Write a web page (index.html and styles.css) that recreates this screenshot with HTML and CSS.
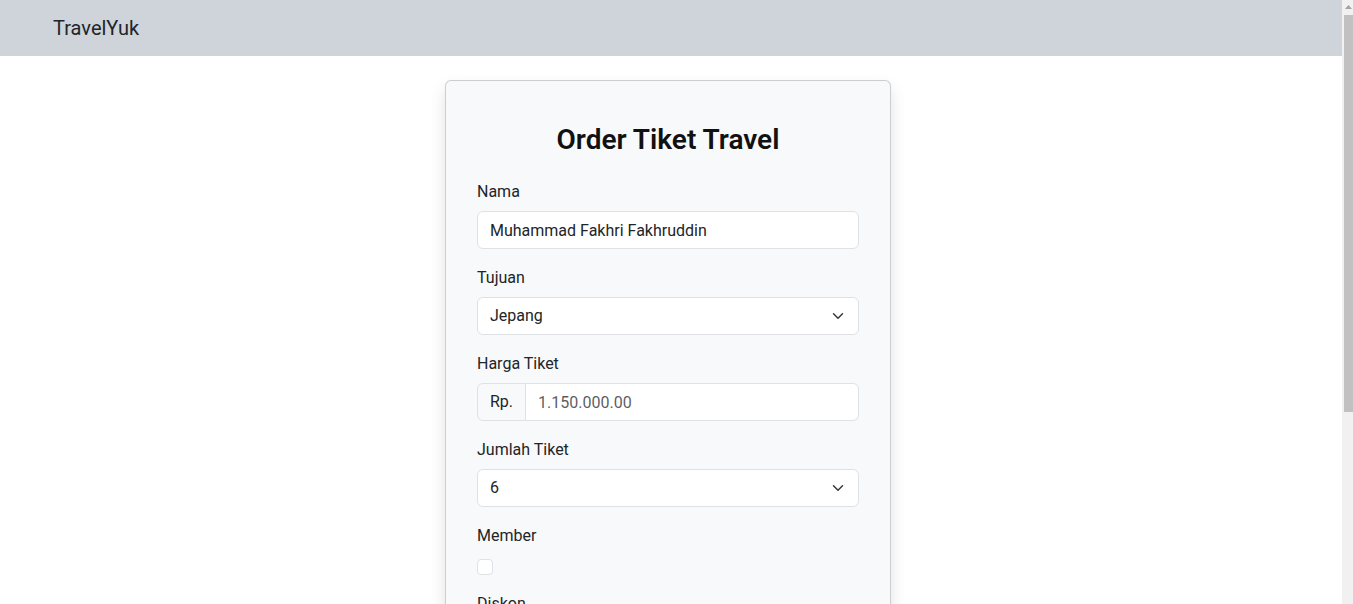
FILE: index.html
```html
<!DOCTYPE html>
<html lang="id">
<head>
<meta charset="utf-8">
<title>TravelYuk</title>
<link rel="stylesheet" href="styles.css">
</head>
<body>
<div class="app">
  <div class="viewport">
    <nav class="navbar">
      <a class="brand" href="#">TravelYuk</a>
    </nav>
    <main class="page">
      <form class="card">
        <h2 class="title">Order Tiket Travel</h2>
        <div class="field">
          <label class="label" for="nama">Nama</label>
          <input class="control" id="nama" type="text" value="Muhammad Fakhri Fakhruddin">
        </div>
        <div class="field">
          <label class="label" for="tujuan">Tujuan</label>
          <select class="control select" id="tujuan">
            <option>Jepang</option>
          </select>
        </div>
        <div class="field">
          <label class="label" for="harga">Harga Tiket</label>
          <div class="group">
            <span class="group-text">Rp.</span>
            <input class="control group-control" id="harga" type="text" placeholder="1.150.000.00" readonly>
          </div>
        </div>
        <div class="field">
          <label class="label" for="jumlah">Jumlah Tiket</label>
          <select class="control select" id="jumlah">
            <option>6</option>
          </select>
        </div>
        <div class="field">
          <label class="label" for="member">Member</label>
          <input class="check" id="member" type="checkbox">
        </div>
        <div class="field">
          <label class="label" for="diskon">Diskon</label>
          <input class="control" id="diskon" type="text" value="0%" readonly>
        </div>
        <div class="field">
          <label class="label" for="total">Total Bayar</label>
          <div class="group">
            <span class="group-text">Rp.</span>
            <input class="control group-control" id="total" type="text" placeholder="6.900.000.00" readonly>
          </div>
        </div>
        <button class="btn" type="button">Pesan</button>
      </form>
    </main>
  </div>
  <div class="scrollbar" aria-hidden="true">
    <div class="sb-button">
      <svg width="7" height="4" viewBox="0 0 7 4"><path d="M0 4 L3.5 0 L7 4 Z" fill="#a3a3a3"/></svg>
    </div>
    <div class="sb-thumb"></div>
  </div>
</div>
</body>
</html>
```
FILE: styles.css
```css
* { box-sizing: border-box; }
html, body { margin: 0; height: 100%; overflow: hidden; }
body {
  font-family: Roboto, "Noto Sans", sans-serif;
  font-size: 16px;
  line-height: 1.5;
  color: #212529;
  background: #fff;
}
.app {
  display: flex;
  height: 100vh;
}
.viewport {
  flex: 1;
  min-width: 0;
  overflow: hidden;
}
.scrollbar {
  width: 11px;
  flex: none;
  background: #f1f1f1;
  display: flex;
  flex-direction: column;
  align-items: flex-end;
}
.sb-button {
  width: 9px;
  height: 15px;
  display: flex;
  align-items: center;
  justify-content: center;
  padding-bottom: 2px;
}
.sb-thumb {
  width: 9px;
  height: 397px;
  background: #c1c1c1;
}

.navbar {
  height: 56px;
  background: #ced4da;
  display: flex;
  align-items: center;
  padding-left: 53px;
}
.brand {
  font-size: 20px;
  line-height: 30px;
  color: #212529;
  text-decoration: none;
}
.page {
  display: flex;
  justify-content: center;
  padding: 24px 0 12px;
}
.card {
  width: 446px;
  margin-left: -6px;
  background: #f8f9fa;
  border: 1px solid rgba(0,0,0,.175);
  border-radius: 6px;
  box-shadow: 0 .5rem 1rem rgba(0,0,0,.12);
  padding: 38px 31px 32px;
  display: flex;
  flex-direction: column;
}
.title {
  margin: 2px 0 20px;
  font-size: 28px;
  line-height: 38px;
  font-weight: 600;
  text-align: center;
  color: #111;
}
.field { margin-bottom: 16px; display: flex; flex-direction: column; align-items: flex-start; }
.label { display: block; padding-top: 1px; margin-bottom: 7px; line-height: 24px; }
.control {
  width: 100%;
  height: 38px;
  font: inherit;
  color: #212529;
  background: #fff;
  border: 1px solid #dee2e6;
  border-radius: 6px;
  padding: 6px 12px;
  outline: none;
}
.control::placeholder { color: rgba(33,37,41,.75); }
.select {
  appearance: none;
  -webkit-appearance: none;
  padding-right: 36px;
  background-image: url("data:image/svg+xml,%3csvg xmlns='http://www.w3.org/2000/svg' viewBox='0 0 16 16'%3e%3cpath fill='none' stroke='%23343a40' stroke-linecap='round' stroke-linejoin='round' stroke-width='2' d='m2 5 6 6 6-6'/%3e%3c/svg%3e");
  background-repeat: no-repeat;
  background-position: right 12px center;
  background-size: 16px 12px;
}
.group { display: flex; width: 100%; }
.group-text {
  display: flex;
  align-items: center;
  padding: 6px 12px;
  height: 38px;
  background: #f8f9fa;
  border: 1px solid #dee2e6;
  border-radius: 6px 0 0 6px;
}
.group-control {
  flex: 1;
  border-left: 0;
  border-radius: 0 6px 6px 0;
}
.check {
  appearance: none;
  -webkit-appearance: none;
  width: 16px;
  height: 16px;
  margin: 4px 0 0;
  background: #fff;
  border: 1px solid #dee2e6;
  border-radius: 4px;
}
.btn {
  align-self: flex-start;
  font: inherit;
  color: #fff;
  background: #0d6efd;
  border: 1px solid #0d6efd;
  border-radius: 6px;
  padding: 6px 12px;
}
```
